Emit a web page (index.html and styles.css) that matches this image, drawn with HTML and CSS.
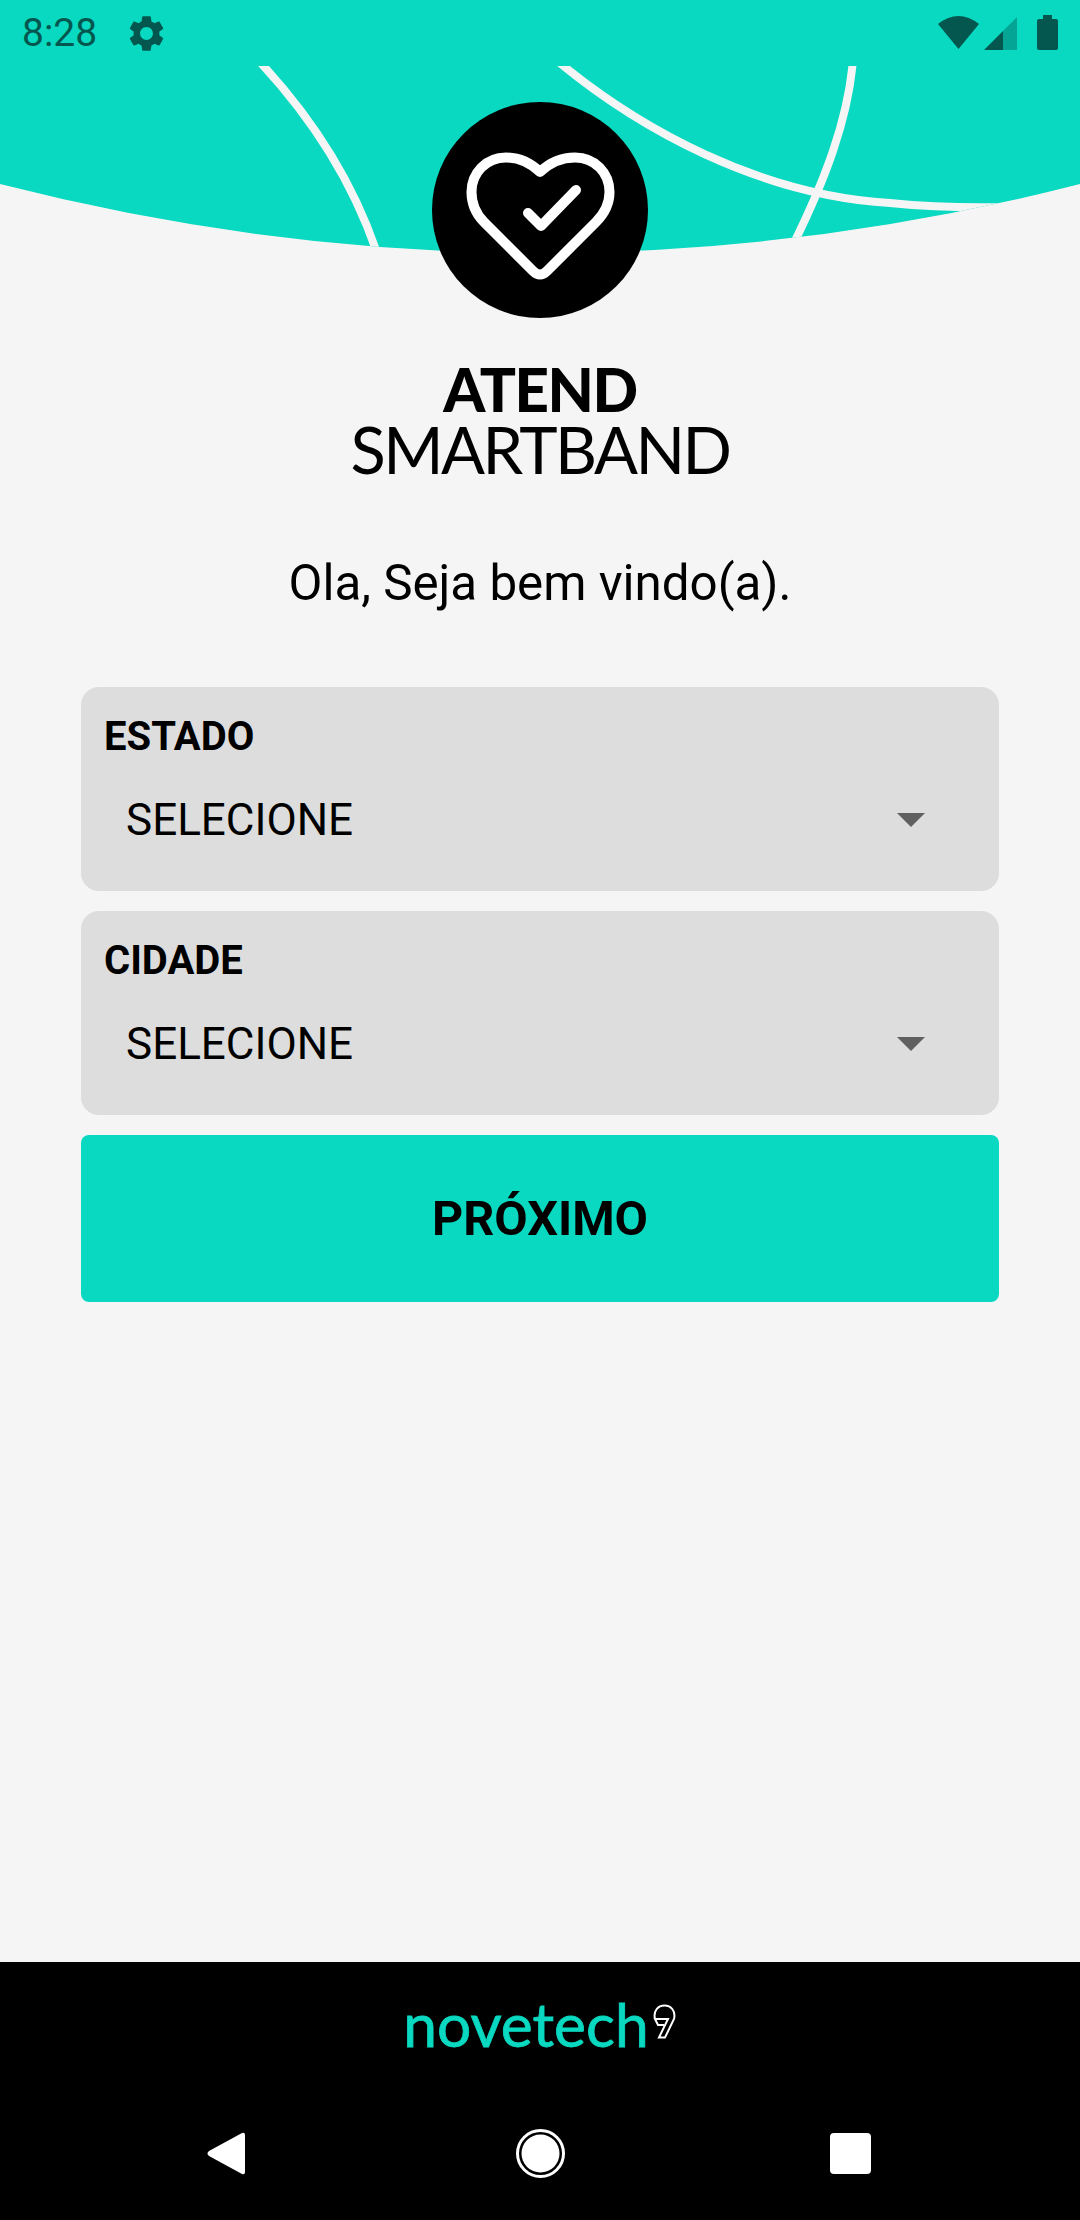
FILE: index.html
```html
<!DOCTYPE html>
<html lang="en">

<head>
    <meta charset="UTF-8">
    <meta name="viewport" content="width=device-width, initial-scale=1.0">
    <title>Atend Smartband</title>
    <link rel="stylesheet" href="styles.css">
</head>

<body>
    <div class="hero">
        <svg class="hero-art" width="1080" height="320" viewBox="0 0 1080 320">
            <defs>
                <clipPath id="wave-clip">
                    <path d="M0 66H1080V184Q540 322 0 184Z"/>
                </clipPath>
            </defs>
            <path class="wave" d="M0 0H1080V184Q540 322 0 184Z"/>
            <g class="wave-lines" clip-path="url(#wave-clip)">
                <path d="M258 60C305 110 350 175 376 250"/>
                <path d="M555 59C640 130 760 195 890 203C930 207 970 208 1010 207"/>
                <path d="M853 60C848 120 825 180 793 245"/>
            </g>
            <circle cx="540" cy="210" r="108"/>
            <g class="heart">
                <path d="M540 172Q525 157.5 506 157.5C486 157.5 471.5 173 471.5 192C471.5 204 476 214 484 222L533 271Q540 278 547 271L596 222C604 214 609.5 204 609.5 192C609.5 173 595 157.5 575 157.5Q555 157.5 540 172Z"/>
                <path d="M528 213L541 226L576 190"/>
            </g>
        </svg>

        <!-- Android status bar -->
        <div class="status-bar">
            <div class="status-left">
                <span class="clock">8:28</span>
                <svg class="gear" width="43" height="43" viewBox="0 0 24 24">
                    <path d="M19.14 12.94c.04-.3.06-.61.06-.94 0-.32-.02-.64-.07-.94l2.03-1.58c.18-.14.23-.41.12-.61l-1.92-3.32c-.12-.22-.37-.29-.59-.22l-2.39.96c-.5-.38-1.03-.7-1.62-.94l-.36-2.54c-.04-.24-.24-.41-.48-.41h-3.84c-.24 0-.43.17-.47.41l-.36 2.54c-.59.24-1.13.57-1.62.94l-2.39-.96c-.22-.08-.47 0-.59.22L2.74 8.87c-.12.21-.08.47.12.61l2.03 1.58c-.05.3-.09.63-.09.94s.02.64.07.94l-2.03 1.58c-.18.14-.23.41-.12.61l1.92 3.32c.12.22.37.29.59.22l2.39-.96c.5.38 1.03.7 1.62.94l.36 2.54c.05.24.24.41.48.41h3.84c.24 0 .44-.17.47-.41l.36-2.54c.59-.24 1.13-.56 1.62-.94l2.39.96c.22.08.47 0 .59-.22l1.92-3.32c.12-.22.07-.47-.12-.61l-2.01-1.58zM12 15.6c-1.98 0-3.6-1.62-3.6-3.6s1.62-3.6 3.6-3.6 3.6 1.62 3.6 3.6-1.62 3.6-3.6 3.6z"/>
                </svg>
            </div>
            <svg class="status-icons" width="122" height="37" viewBox="0 0 122 37">
                <path d="M0 9Q20.5 -7 41 9L20.5 34Z"/>
                <path class="signal-off" d="M65 16L79 2V35H65Z"/>
                <path d="M46 35L65 16V35Z"/>
                <path d="M105 0H114V4H118Q120 4 120 6V33Q120 35 118 35H101Q99 35 99 33V6Q99 4 101 4H105Z"/>
            </svg>
        </div>
    </div>

    <div class="brand">
        <div class="brand-top">ATEND</div>
        <div class="brand-bottom">SMARTBAND</div>
    </div>

    <p class="welcome">Ola, Seja bem vindo(a).</p>

    <form class="location-form">
        <div class="select-card">
            <div class="select-label">ESTADO</div>
            <div class="select-row">
                <span>SELECIONE</span>
                <div class="select-arrow"></div>
            </div>
        </div>
        <div class="select-card">
            <div class="select-label">CIDADE</div>
            <div class="select-row">
                <span>SELECIONE</span>
                <div class="select-arrow"></div>
            </div>
        </div>
        <div class="next-button">PRÓXIMO</div>
    </form>

    <div class="footer">
        <div class="footer-logo">
            <span>novetech</span>
            <svg width="25" height="35" viewBox="0 0 25 35">
                <path d="M3 15C1 7 6 1.500 12.500 1.500C19 1.500 24 7 22 15L13 33.500H7L16 15H3L6 21H12"/>
            </svg>
        </div>
        <!-- Android nav bar -->
        <div class="nav-bar">
            <svg width="38" height="43" viewBox="0 0 38 43">
                <path d="M35 1Q38 0 38 3V40Q38 43 35 42L2 24Q-1 21.500 2 19Z"/>
            </svg>
            <svg width="49" height="49" viewBox="0 0 49 49">
                <circle class="home-ring" cx="24.500" cy="24.500" r="23"/>
                <circle cx="24.500" cy="24.500" r="19"/>
            </svg>
            <div class="recents"></div>
        </div>
    </div>
</body>

</html>
```

FILE: styles.css
```css
body {
    margin: 0;
    width: 1080px;
    height: 2220px;
    background-color: #f5f5f5;
    font-family: Roboto, sans-serif;
    color: black;
    display: flex;
    flex-direction: column;
    overflow: hidden;
}

.hero {
    position: relative;
    height: 320px;
    flex-shrink: 0;
}

.hero-art {
    display: block;
}

.wave {
    fill: #08d9c0;
}

.wave-lines path {
    fill: none;
    stroke: #f5f5f5;
    stroke-width: 8;
}

.heart path {
    fill: none;
    stroke: white;
    stroke-width: 10;
    stroke-linecap: round;
    stroke-linejoin: round;
}

.status-bar {
    position: absolute;
    top: 0;
    left: 0;
    right: 0;
    height: 66px;
    padding: 0 20px 0 22px;
    box-sizing: border-box;
    display: flex;
    justify-content: space-between;
    align-items: center;
}

.status-left {
    display: flex;
    align-items: center;
    gap: 28px;
}

.clock {
    font-size: 39px;
    color: #03574f;
}

.gear {
    fill: #03574f;
}

.status-icons {
    fill: #03574f;
}

.signal-off {
    fill: #05a596;
}

.brand {
    text-align: center;
    margin-top: 40px;
}

.brand-top {
    font-family: Lato, sans-serif;
    font-weight: 900;
    font-size: 60px;
    line-height: 58px;
    letter-spacing: -1.4px;
}

.brand-bottom {
    font-family: Lato, sans-serif;
    font-weight: 400;
    font-size: 65px;
    line-height: 62px;
    letter-spacing: -2.5px;
}

.welcome {
    margin: 73px 0 0;
    text-align: center;
    font-size: 49.3px;
    line-height: 60px;
}

.location-form {
    margin: 74px 81px 0;
    display: flex;
    flex-direction: column;
    gap: 20px;
}

.select-card {
    height: 204px;
    background-color: #dddddd;
    border-radius: 18px;
    padding: 28px 23px 0;
    box-sizing: border-box;
}

.select-label {
    font-size: 40px;
    font-weight: bold;
    line-height: 44px;
}

.select-row {
    display: flex;
    justify-content: space-between;
    align-items: center;
    margin-top: 33px;
    padding: 0 51px 0 22px;
    font-size: 44px;
    line-height: 56px;
}

.select-arrow {
    width: 0;
    height: 0;
    border-left: 14px solid transparent;
    border-right: 14px solid transparent;
    border-top: 14px solid #606060;
}

.next-button {
    height: 167px;
    background-color: #08d9c0;
    border-radius: 8px;
    display: flex;
    justify-content: center;
    align-items: center;
    font-size: 48.500px;
    font-weight: bold;
}

.footer {
    margin-top: auto;
    height: 258px;
    background-color: black;
    display: flex;
    flex-direction: column;
    box-sizing: border-box;
}

.footer-logo {
    display: flex;
    justify-content: center;
    align-items: flex-start;
    margin-top: 26px;
    height: 72px;
    font-family: Lato, sans-serif;
    font-size: 60.500px;
    line-height: 72px;
    color: #08d9c0;
    -webkit-text-stroke: 0.8px #08d9c0;
}

.footer-logo svg {
    fill: none;
    stroke: white;
    stroke-width: 2;
    margin: 16px 0 0 3px;
}

.nav-bar {
    display: grid;
    grid-template-columns: 1fr auto 1fr;
    align-items: center;
    margin-top: 69px;
    padding: 0 207px;
}

.nav-bar svg {
    fill: white;
}

.home-ring {
    fill: none;
    stroke: white;
    stroke-width: 3;
}

.recents {
    justify-self: end;
    width: 41px;
    height: 41px;
    margin-right: 2px;
    background-color: white;
    border-radius: 4px;
}
```
